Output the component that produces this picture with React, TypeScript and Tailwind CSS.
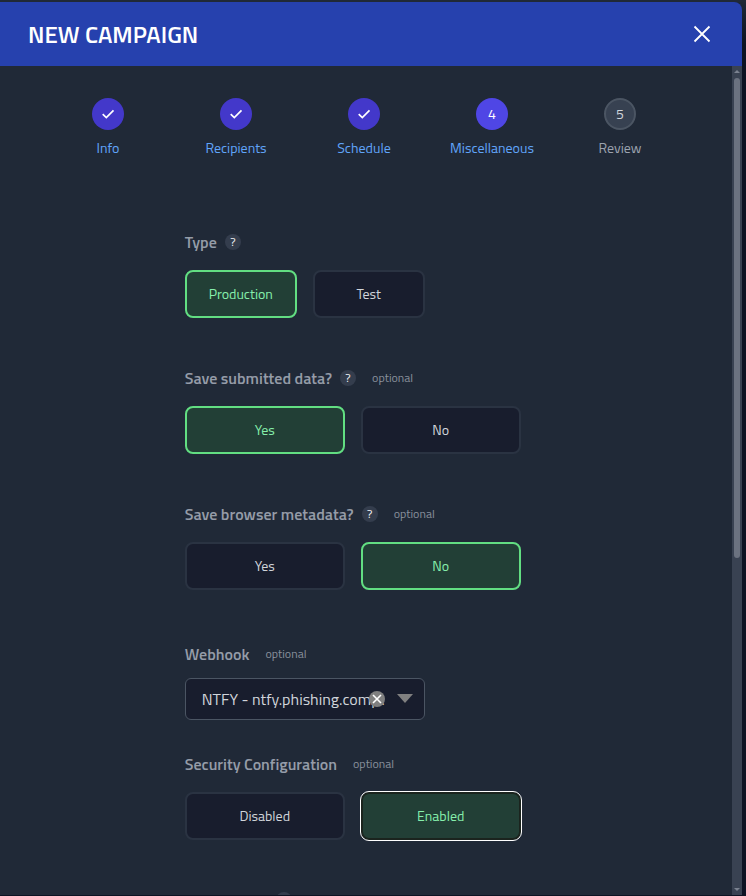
import { useState } from "react";

type FieldLabelProps = {
  text: string;
  help?: boolean;
  optional?: boolean;
};

type ToggleGroupProps = {
  options: string[];
  value: string;
  onChange: (value: string) => void;
  size: string;
  focused?: boolean;
};

const steps = ["Info", "Recipients", "Schedule", "Miscellaneous", "Review"];

const currentStep = 3;

function HelpBadge() {
  return (
    <span className="flex h-4 w-4 shrink-0 items-center justify-center rounded-full bg-[#343d4d] text-xs leading-none font-medium text-[#f3f4f6]">
      ?
    </span>
  );
}

function FieldLabel({ text, help, optional }: FieldLabelProps) {
  return (
    <div className="flex h-6 items-center">
      <span className="shrink-0 text-base font-semibold whitespace-nowrap text-[#959ca8]">{text}</span>
      {help && (
        <span className="ml-2">
          <HelpBadge />
        </span>
      )}
      {optional && <span className="ml-4 text-xs text-[#89909c]">optional</span>}
    </div>
  );
}

function ToggleGroup({ options, value, onChange, size, focused }: ToggleGroupProps) {
  return (
    <div className="mt-4 flex gap-4">
      {options.map((option) => {
        const selected = option === value;
        const focusRing = selected && focused;
        return (
          <button
            key={option}
            onClick={() => onChange(option)}
            className={`h-12 rounded-lg border-2 text-sm ${size} ${
              selected ? "bg-[#223f36] text-[#86efac]" : "border-[#2a3342] bg-[#181d2d] text-[#d1d5db]"
            } ${selected && !focusRing ? "border-[#62de82]" : ""} ${
              focusRing ? "border-[#1b241e] outline outline-1 outline-white" : ""
            }`}
          >
            {option}
          </button>
        );
      })}
    </div>
  );
}

export default function App() {
  const [type, setType] = useState("Production");
  const [saveData, setSaveData] = useState("Yes");
  const [saveMetadata, setSaveMetadata] = useState("No");
  const [security, setSecurity] = useState("Enabled");

  return (
    <div className="h-[896px] w-[746px] overflow-hidden bg-linear-to-b from-[#1f2937] via-[#0d1323] via-5% to-[#0d1323] font-['Titillium_Web',Roboto,sans-serif]">
      <div className="h-0.5 bg-[#202937]" />

      <div className="flex h-[893px] w-[742px] flex-col overflow-hidden rounded-tr-lg bg-[#202937]">
        <header className="flex h-16 shrink-0 items-center justify-between bg-[#2641ae] pr-[31px] pl-7">
          <h1 className="text-2xl font-semibold whitespace-nowrap text-white">NEW CAMPAIGN</h1>
          <button aria-label="Close">
            <svg width="18" height="18" viewBox="0 0 18 18" fill="none" stroke="white" strokeWidth="1.8">
              <path d="M1.5 1.5 16.5 16.5M16.5 1.5 1.5 16.5" />
            </svg>
          </button>
        </header>

        <div className="flex min-h-0 flex-1">
          <main className="flex-1 overflow-hidden pt-8">
            <ol className="ml-11 flex">
              {steps.map((step, i) => (
                <li key={step} className="flex w-32 flex-col items-center">
                  <div
                    className={`flex h-8 w-8 items-center justify-center rounded-full text-sm ${
                      i < currentStep ? "bg-[#4338ca] text-white" : ""
                    } ${i === currentStep ? "bg-[#4f46e5] text-white" : ""} ${
                      i > currentStep ? "border-2 border-[#4b5563] bg-[#374151] text-[#d1d5db]" : ""
                    }`}
                  >
                    {i < currentStep ? (
                      <svg width="16" height="16" viewBox="0 0 16 16" fill="none" stroke="currentColor" strokeWidth="1.7">
                        <path d="m2.7 8.1 3.6 3.4 7.2-7.2" />
                      </svg>
                    ) : (
                      i + 1
                    )}
                  </div>
                  <span
                    className={`mt-2 text-sm whitespace-nowrap ${
                      i <= currentStep ? "text-[#60a5fa]" : "text-[#9ca3af]"
                    }`}
                  >
                    {step}
                  </span>
                </li>
              ))}
            </ol>

            <form className="mt-[72px] ml-[184.75px]" onSubmit={(e) => e.preventDefault()}>
              <FieldLabel text="Type" help />
              <ToggleGroup options={["Production", "Test"]} value={type} onChange={setType} size="w-28" />

              <div className="mt-12">
                <FieldLabel text="Save submitted data?" help optional />
                <ToggleGroup options={["Yes", "No"]} value={saveData} onChange={setSaveData} size="w-40" />
              </div>

              <div className="mt-12">
                <FieldLabel text="Save browser metadata?" help optional />
                <ToggleGroup options={["Yes", "No"]} value={saveMetadata} onChange={setSaveMetadata} size="w-40" />
              </div>

              <div className="mt-[52px]">
                <FieldLabel text="Webhook" optional />
                <div className="relative mt-3 flex h-[42px] w-60 items-center rounded-md border border-[#4b5563] bg-[#181d2d] pl-4">
                  <span className="text-base whitespace-nowrap text-[#d1d5db]">
                    NTFY - ntfy.phishing.comp<span className="tracking-[-1.8px]">..</span>
                  </span>
                  <button aria-label="Clear" className="absolute top-3 left-[183px]">
                    <svg width="16" height="16" viewBox="0 0 16 16" fill="none">
                      <circle cx="8" cy="8" r="8" fill="#808080" />
                      <path d="m4 4 8 8M12 4l-8 8" stroke="white" strokeWidth="1.6" />
                    </svg>
                  </button>
                  <svg className="absolute top-[15px] left-[211px]" width="16" height="9" viewBox="0 0 16 9">
                    <path d="M0 0h16L8 9z" fill="#808080" />
                  </svg>
                </div>
              </div>

              <div className="mt-8">
                <FieldLabel text="Security Configuration" optional />
                <ToggleGroup
                  options={["Disabled", "Enabled"]}
                  value={security}
                  onChange={setSecurity}
                  size="w-40"
                  focused
                />
              </div>

              {/* Next field starts just below the fold */}
              <div className="mt-[52px] pl-[91.25px]">
                <div className="h-4 w-4 rounded-full bg-[#343d4d]" />
              </div>
            </form>
          </main>

          {/* Scrollbar */}
          <div className="flex w-2.5 shrink-0 flex-col items-center bg-[#394252] pt-1">
            <svg width="6" height="3" viewBox="0 0 6 3">
              <path d="M0 3h6L3 0z" fill="#7b8290" />
            </svg>
            <div className="mt-[5px] h-[480px] w-1.5 rounded-full bg-[#6b7280]" />
            <svg className="mt-auto mb-1" width="6" height="3" viewBox="0 0 6 3">
              <path d="M0 0h6L3 3z" fill="#7b8290" />
            </svg>
          </div>
        </div>
      </div>
    </div>
  );
}
